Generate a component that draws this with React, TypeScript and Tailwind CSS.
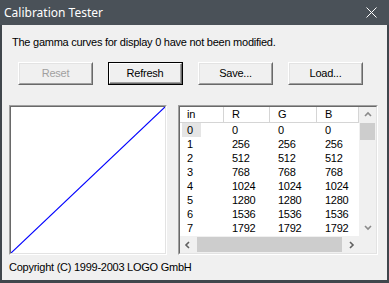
const rows = [
  [0, 0, 0, 0],
  [1, 256, 256, 256],
  [2, 512, 512, 512],
  [3, 768, 768, 768],
  [4, 1024, 1024, 1024],
  [5, 1280, 1280, 1280],
  [6, 1536, 1536, 1536],
  [7, 1792, 1792, 1792],
];

const colWidths = ["w-[44px]", "w-[46px]", "w-[47px]", "flex-1"];

function Button({
  label,
  isDefault,
  disabled,
}: {
  label: string;
  isDefault?: boolean;
  disabled?: boolean;
}) {
  if (isDefault) {
    return (
      <div className="h-[23px] w-[75px] border border-black">
        <div className="h-full w-full border-t border-l border-r border-b border-t-white border-l-white border-r-[#696969] border-b-[#696969]">
          <div className="flex h-full w-full items-center justify-center border-r border-b border-r-[#a0a0a0] border-b-[#a0a0a0] text-black">
            {label}
          </div>
        </div>
      </div>
    );
  }

  return (
    <div className="h-[23px] w-[75px] border border-t-white border-l-white border-r-[#696969] border-b-[#696969]">
      <div
        className={`flex h-full w-full items-center justify-center border border-t-[#e3e3e3] border-l-[#e3e3e3] border-r-[#a0a0a0] border-b-[#a0a0a0] ${
          disabled ? "text-[#a0a0a0]" : "text-black"
        }`}
      >
        {label}
      </div>
    </div>
  );
}

function Sunken({ className, children }: { className: string; children: React.ReactNode }) {
  return (
    <div
      className={`border border-t-[#a0a0a0] border-l-[#a0a0a0] border-r-white border-b-white ${className}`}
    >
      <div className="h-full w-full border border-t-[#696969] border-l-[#696969] border-r-[#e3e3e3] border-b-[#e3e3e3] bg-white">
        {children}
      </div>
    </div>
  );
}

function Chevron({ dir, color }: { dir: "up" | "down" | "left" | "right"; color: string }) {
  const paths = {
    up: "M1 5 L4 2 L7 5",
    down: "M1 2 L4 5 L7 2",
    left: "M5 1 L2 4 L5 7",
    right: "M3 1 L6 4 L3 7",
  };
  return (
    <svg width="8" height="8" viewBox="0 0 8 8">
      <path d={paths[dir]} fill="none" stroke={color} strokeWidth="1.6" />
    </svg>
  );
}

export default function App() {
  return (
    <div
      className="flex h-[283px] w-[389px] flex-col bg-[#40464c] text-[11px] leading-[13px] tracking-[-0.25px]"
      style={{ fontFamily: '"Liberation Sans", Arial, sans-serif' }}
    >
      <div className="flex h-[25px] shrink-0 items-center justify-between bg-[#4a5158] pl-[4px] pr-[12px]">
        <span
          className="text-[12px] tracking-normal text-white"
          style={{ fontFamily: '"Noto Sans", sans-serif' }}
        >
          Calibration Tester
        </span>
        <svg width="11" height="11" viewBox="0 0 11 11">
          <path d="M0.5 0.5 L10.5 10.5 M10.5 0.5 L0.5 10.5" stroke="#ffffff" strokeWidth="1" />
        </svg>
      </div>

      <div className="mx-[2px] mb-[3px] flex flex-1 flex-col bg-[#f0f0f0] text-black">
        <p className="mt-[11px] pl-[10px]">
          The gamma curves for display 0 have not been modified.
        </p>

        <div className="mt-[13px] flex gap-[15px] pl-[16px]">
          <Button label="Reset" disabled />
          <Button label="Refresh" isDefault />
          <Button label="Save..." />
          <Button label="Load..." />
        </div>

        <div className="mt-[20px] flex gap-[11px] pl-[7px]">
          <Sunken className="h-[150px] w-[158px]">
            <svg
              className="h-full w-full"
              viewBox="0 0 154 146"
              preserveAspectRatio="none"
            >
              <line
                x1="0"
                y1="146"
                x2="154"
                y2="0"
                stroke="#0000ff"
                strokeWidth="1.2"
                vectorEffect="non-scaling-stroke"
              />
            </svg>
          </Sunken>

          <Sunken className="h-[150px] w-[200px]">
            <div className="flex h-full flex-col">
              <div className="flex flex-1 overflow-hidden">
                <div className="flex w-[179px] flex-col">
                  <div className="flex h-[16px] shrink-0 border-b border-[#d5d5d5] bg-white">
                    {["in", "R", "G", "B"].map((h, i) => (
                      <div
                        key={h}
                        className={`${colWidths[i]} flex items-center border-r border-[#d5d5d5] ${
                          i === 0 ? "pl-[7px]" : "pl-[8px]"
                        }`}
                      >
                        {h}
                      </div>
                    ))}
                  </div>
                  {rows.map((r, ri) => (
                    <div key={ri} className="flex h-[14px] shrink-0 items-center">
                      {r.map((v, i) => (
                        <div
                          key={i}
                          className={`${colWidths[i]} ${i === 0 ? "pl-[2px]" : "pl-[8px]"}`}
                        >
                          <span
                            className={`inline-block h-[14px] leading-[14px] ${
                              ri === 0 && i === 0 ? "bg-[#e5e5e5] pl-[5px] pr-[8px]" : i === 0 ? "pl-[5px]" : ""
                            }`}
                          >
                            {v}
                          </span>
                        </div>
                      ))}
                    </div>
                  ))}
                </div>
                <div className="flex w-[17px] flex-col items-center bg-[#f0f0f0]">
                  <div className="flex h-[16px] items-center justify-center">
                    <Chevron dir="up" color="#8a8a8a" />
                  </div>
                  <div className="h-[17px] w-[15px] bg-[#cdcdcd]" />
                  <div className="flex-1" />
                  <div className="flex h-[16px] items-center justify-center">
                    <Chevron dir="down" color="#8a8a8a" />
                  </div>
                </div>
              </div>
              <div className="flex h-[17px] shrink-0 bg-[#f0f0f0]">
                <div className="flex w-[17px] items-center justify-center">
                  <Chevron dir="left" color="#606060" />
                </div>
                <div className="my-[1px] w-[146px] bg-[#cdcdcd]" />
                <div className="flex-1" />
                <div className="flex w-[17px] items-center justify-center">
                  <Chevron dir="right" color="#606060" />
                </div>
                <div className="w-[17px]" />
              </div>
            </div>
          </Sunken>
        </div>

        <p className="mt-[6px] pl-[7px]">Copyright (C) 1999-2003 LOGO GmbH</p>
      </div>
    </div>
  );
}
